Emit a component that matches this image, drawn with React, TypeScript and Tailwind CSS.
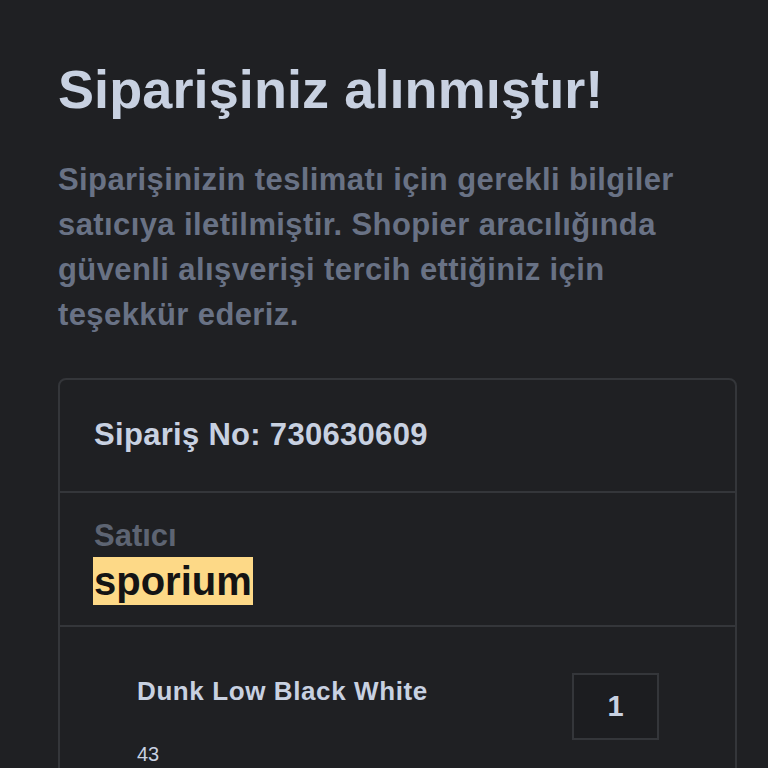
import React from "react";

export default function App() {
  return (
    <div
      className="w-[768px] h-[768px] overflow-hidden bg-[#1f2023]"
      style={{ fontFamily: '"Liberation Sans", Arial, sans-serif' }}
    >
      <div className="pl-[58px] pr-[31px] pt-[57px]">
        <h1 className="text-[54px] leading-[64px] font-bold text-[#c8d1e1] tracking-[0.1px] whitespace-nowrap">
          Siparişiniz alınmıştır!
        </h1>
        <p className="mt-[36px] text-[31px] leading-[45px] font-bold text-[#697285] tracking-[0.4px] pr-[20px]">
          Siparişinizin teslimatı için gerekli bilgiler satıcıya iletilmiştir. Shopier aracılığında güvenli alışverişi tercih ettiğiniz için teşekkür ederiz.
        </p>
        <div className="mt-[41px] border-2 border-[#34363a] rounded-[8px]">
          <div className="h-[113px] flex items-center px-[34px] border-b-2 border-[#34363a]">
            <span className="text-[31px] font-bold text-[#c8d1e1] tracking-[0.3px]">Sipariş No: 730630609</span>
          </div>
          <div className="h-[134px] px-[33px] pt-[24px] border-b-2 border-[#34363a]">
            <div className="text-[31px] leading-[38px] font-bold text-[#5d6472] pl-[1px]">Satıcı</div>
            <div className="mt-[2px] inline-block bg-[#fdd987] text-[40px] leading-[48px] font-bold text-[#141414] px-[1px]">
              sporium
            </div>
          </div>
          <div className="pl-[77px] pr-[76px] pt-[47px] pb-[40px] flex justify-between items-start">
            <div>
              <div className="text-[26px] leading-[34px] font-bold text-[#c8d1e1] tracking-[0.6px]">Dunk Low Black White</div>
              <div className="mt-[34px] text-[20px] leading-[24px] text-[#c8d1e1]">43</div>
            </div>
            <div className="w-[87px] h-[67px] border-2 border-[#34363a] bg-[#1c1d20] flex items-center justify-center text-[29px] font-bold text-[#c8d1e1] mt-[-1px]">
              1
            </div>
          </div>
        </div>
      </div>
    </div>
  );
}
